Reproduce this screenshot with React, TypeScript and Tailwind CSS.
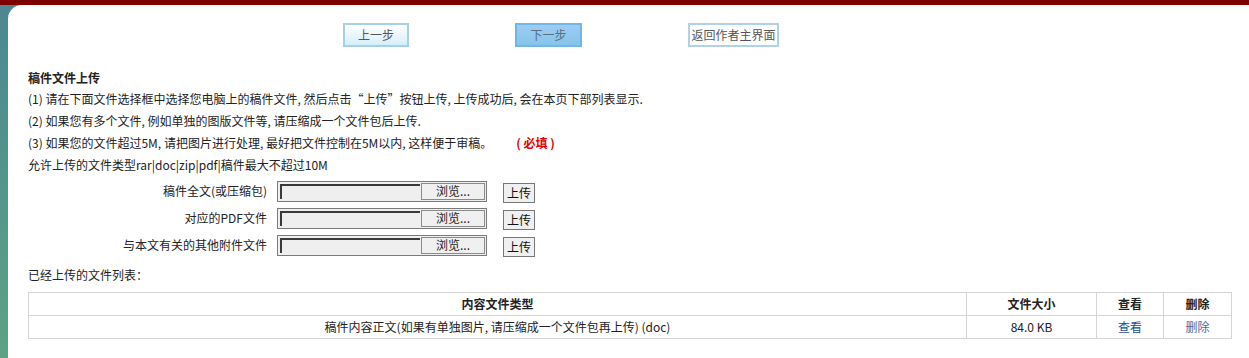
import React from 'react';

const font = { fontFamily: '"Noto Sans CJK SC", "DejaVu Sans", sans-serif' };

const notes = [
  '(1) 请在下面文件选择框中选择您电脑上的稿件文件, 然后点击“上传”按钮上传, 上传成功后, 会在本页下部列表显示.',
  '(2) 如果您有多个文件, 例如单独的图版文件等, 请压缩成一个文件包后上传.',
];

const uploadRows = ['稿件全文(或压缩包)', '对应的PDF文件', '与本文有关的其他附件文件'];

function FilePicker() {
  return (
    <div className="flex h-[21px] w-[210px] border border-[#7a7a7a] bg-[#f0f0f0]">
      <div className="flex-1 border-l-2 border-t-2 border-[#3a3a3a] bg-[#efefef] m-[2px] mr-0" />
      <div className="w-[64px] flex items-center justify-center text-[12px] text-[#222] border border-[#8a8a8a] bg-[#f0f0f0] m-[1px]">
        浏览...
      </div>
    </div>
  );
}

export default function App() {
  return (
    <div className="w-[1249px] h-[358px] overflow-hidden bg-white text-[12px] text-[#222]" style={font}>
      <div className="h-[5px] bg-[#7f0000]" />
      <div className="flex h-[353px] bg-gradient-to-b from-[#4d8792] to-[#5ea184]">
        <div className="w-[8px]" />
        <div className="flex-1 bg-white rounded-tl-[14px] pl-[20px] pr-[9px]">
          <div className="flex items-center gap-[106px] pl-[315px] pt-[18px] h-[42px]">
            <button className="h-[24px] w-[66px] border-2 border-[#a6d0ea] bg-gradient-to-b from-white to-[#d6effb] text-[#555] text-[12px]">
              上一步
            </button>
            <button className="h-[24px] w-[67px] border-2 border-[#72b6e6] bg-gradient-to-b from-[#9dccf6] to-[#86c4e8] text-[#5a6f80] text-[12px]">
              下一步
            </button>
            <button className="h-[24px] w-[91px] border-2 border-[#b0d2e8] bg-white text-[#555] text-[12px]">
              返回作者主界面
            </button>
          </div>

          <div className="mt-[20px] font-bold h-[21px] leading-[21px]">稿件文件上传</div>
          {notes.map((n) => (
            <div key={n} className="h-[22px] leading-[22px]">{n}</div>
          ))}
          <div className="h-[22px] leading-[22px]">
            (3) 如果您的文件超过5M, 请把图片进行处理, 最好把文件控制在5M以内, 这样便于审稿。
            <span className="ml-[24px] text-[#e00000] font-bold">( 必填 )</span>
          </div>
          <div className="h-[22px] leading-[22px]">允许上传的文件类型rar|doc|zip|pdf|稿件最大不超过10M</div>

          <div className="mt-[4px] flex flex-col gap-[5px]">
            {uploadRows.map((label) => (
              <div key={label} className="flex items-center h-[22px]">
                <div className="w-[239px] text-right">{label}</div>
                <div className="ml-[10px]">
                  <FilePicker />
                </div>
                <button className="ml-[16px] mt-[3px] h-[20px] w-[32px] border border-[#777] bg-[#f0f0f0] text-[12px] text-[#111]">
                  上传
                </button>
              </div>
            ))}
          </div>

          <div className="mt-[8px] h-[22px] leading-[22px]">已经上传的文件列表：</div>

          <table className="mt-[6px] w-[1204px] border-collapse">
            <thead>
              <tr className="h-[23px]">
                <th className="border border-[#d4d4d4] font-bold">内容文件类型</th>
                <th className="w-[130px] border border-[#d4d4d4] font-bold">文件大小</th>
                <th className="w-[67px] border border-[#d4d4d4] font-bold">查看</th>
                <th className="w-[68px] border border-[#d4d4d4] font-bold">删除</th>
              </tr>
            </thead>
            <tbody>
              <tr className="h-[23px] text-center">
                <td className="border border-[#d4d4d4]">稿件内容正文(如果有单独图片, 请压缩成一个文件包再上传) (doc)</td>
                <td className="border border-[#d4d4d4]">84.0 KB</td>
                <td className="border border-[#d4d4d4] text-[#1d4f8a]">查看</td>
                <td className="border border-[#d4d4d4] text-[#4a6c9c]">删除</td>
              </tr>
            </tbody>
          </table>
        </div>
      </div>
    </div>
  );
}
